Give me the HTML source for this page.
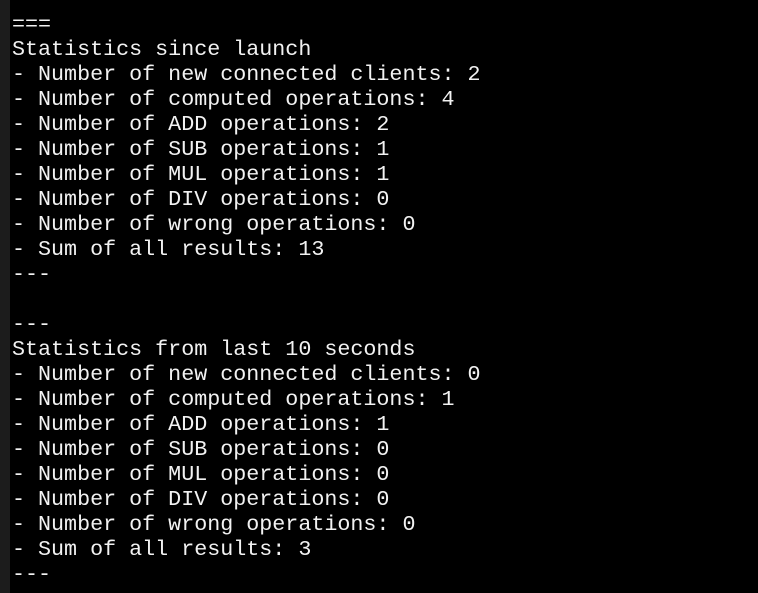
<!DOCTYPE html>
<html><head><meta charset="utf-8"><style>
html,body{margin:0;padding:0;background:#000;width:758px;height:593px;overflow:hidden}
.strip{position:absolute;left:0;top:0;width:10px;height:593px;background:#1c1c1c}
pre{position:absolute;left:12px;top:12px;margin:0;font-family:"Liberation Mono",monospace;font-size:21.7px;line-height:25px;color:#f2f2f2;white-space:pre}
</style></head><body><div class="strip"></div><pre>===
Statistics since launch
- Number of new connected clients: 2
- Number of computed operations: 4
- Number of ADD operations: 2
- Number of SUB operations: 1
- Number of MUL operations: 1
- Number of DIV operations: 0
- Number of wrong operations: 0
- Sum of all results: 13
---

---
Statistics from last 10 seconds
- Number of new connected clients: 0
- Number of computed operations: 1
- Number of ADD operations: 1
- Number of SUB operations: 0
- Number of MUL operations: 0
- Number of DIV operations: 0
- Number of wrong operations: 0
- Sum of all results: 3
---</pre></body></html>
